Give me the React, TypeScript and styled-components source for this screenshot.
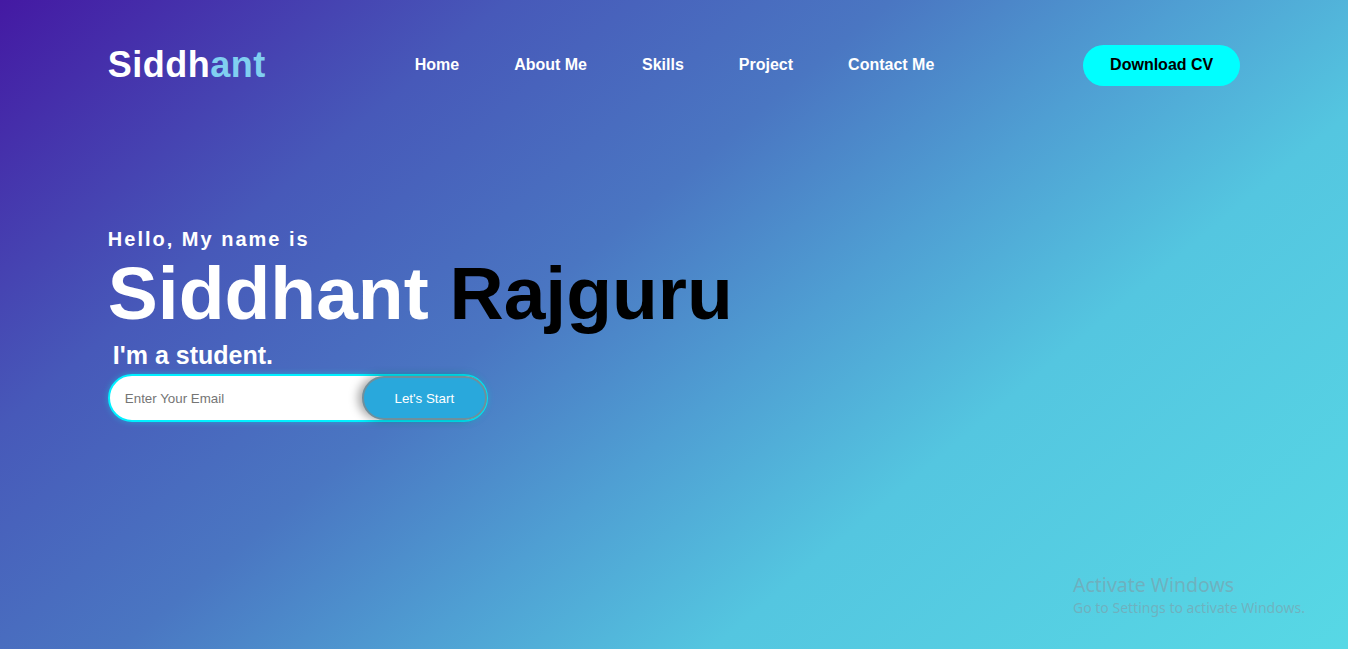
import React from "react";
import styled, { createGlobalStyle } from "styled-components";

const Global = createGlobalStyle`
  * { box-sizing: border-box; }
  html, body { margin: 0; padding: 0; }
  body {
    font-family: "Liberation Sans", Arial, sans-serif;
    min-height: 649px;
    overflow: hidden;
  }
`;

const Page = styled.div`
  position: relative;
  width: 100%;
  height: 649px;
  padding: 0 8%;
  background: linear-gradient(140deg, #4419a3 0%, #4759b9 24%, #4a76c2 42%, #4f9fd3 56%, #54c6e0 70%, #57d8e5 100%);
  overflow: hidden;
`;

const Header = styled.header`
  display: flex;
  align-items: center;
  justify-content: space-between;
  padding-top: 44px;
`;

const Logo = styled.a`
  font-size: 36px;
  font-weight: 700;
  color: #ffffff;
  letter-spacing: 0.5px;
  text-decoration: none;
  width: 158px;
`;

const Accent = styled.span`
  color: #80cff0;
`;

const Nav = styled.nav`
  display: flex;
  gap: 55px;
`;

const NavLink = styled.a`
  color: #ffffff;
  font-size: 16px;
  font-weight: 700;
  text-decoration: none;
`;

const CvButton = styled.a`
  display: inline-flex;
  align-items: center;
  justify-content: center;
  width: 157px;
  height: 41px;
  border-radius: 21px;
  background: #00ffff;
  color: #000000;
  font-size: 16px;
  font-weight: 700;
  text-decoration: none;
`;

const Hero = styled.section`
  display: flex;
  flex-direction: column;
  align-items: flex-start;
  margin-top: 142px;
`;

const Hello = styled.h3`
  margin: 0;
  font-size: 20px;
  line-height: 23px;
  font-weight: 700;
  letter-spacing: 2px;
  color: #ffffff;
`;

const Name = styled.h1`
  margin: -1px 0 0;
  font-size: 75px;
  line-height: 86px;
  font-weight: 700;
  color: #ffffff;
`;

const Dark = styled.span`
  color: #000000;
`;

const Role = styled.h2`
  margin: 5px 0 0 5px;
  font-size: 25px;
  line-height: 29px;
  font-weight: 700;
  color: #ffffff;
`;

const Form = styled.form`
  position: relative;
  margin-top: 4px;
  width: 380px;
  height: 48px;
  border-radius: 25px;
  box-shadow: 0 0 6px rgba(0, 255, 255, 0.35);
`;

const EmailInput = styled.input`
  width: 100%;
  height: 100%;
  padding: 0 0 0 15px;
  border: 2px solid #00f0ff;
  border-radius: 25px;
  background: #ffffff;
  font-family: "Liberation Sans", Arial, sans-serif;
  font-size: 13.33px;
  outline: none;
  &::placeholder { color: #757575; }
`;

const StartButton = styled.button`
  position: absolute;
  top: 2px;
  right: 1px;
  width: 125px;
  height: 44px;
  border-radius: 23px;
  border: 2px solid #6f8f9c;
  background: #29a8dc;
  color: #ffffff;
  font-family: "Liberation Sans", Arial, sans-serif;
  font-size: 13.33px;
  box-shadow: -4px 0 10px rgba(0, 0, 0, 0.35);
  cursor: pointer;
`;

const Watermark = styled.div`
  position: absolute;
  left: 1073px;
  top: 572px;
  font-family: "Noto Sans", "Open Sans", sans-serif;
  color: rgba(135, 145, 155, 0.5);
`;

const WmTitle = styled.div`
  font-size: 19.5px;
  line-height: 26px;
`;

const WmSub = styled.div`
  font-size: 14px;
  line-height: 20px;
`;

export default function App() {
  return (
    <>
      <Global />
      <Page>
        <Header>
          <Logo href="#">
            Siddh<Accent>ant</Accent>
          </Logo>
          <Nav>
            <NavLink href="#">Home</NavLink>
            <NavLink href="#">About Me</NavLink>
            <NavLink href="#">Skills</NavLink>
            <NavLink href="#">Project</NavLink>
            <NavLink href="#">Contact Me</NavLink>
          </Nav>
          <CvButton href="#">Download CV</CvButton>
        </Header>
        <Hero>
          <Hello>Hello, My name is</Hello>
          <Name>
            Siddhant <Dark>Rajguru</Dark>
          </Name>
          <Role>I'm a student.</Role>
          <Form onSubmit={(e) => e.preventDefault()}>
            <EmailInput type="email" placeholder="Enter Your Email" />
            <StartButton type="submit">Let's Start</StartButton>
          </Form>
        </Hero>
        <Watermark>
          <WmTitle>Activate Windows</WmTitle>
          <WmSub>Go to Settings to activate Windows.</WmSub>
        </Watermark>
      </Page>
    </>
  );
}
